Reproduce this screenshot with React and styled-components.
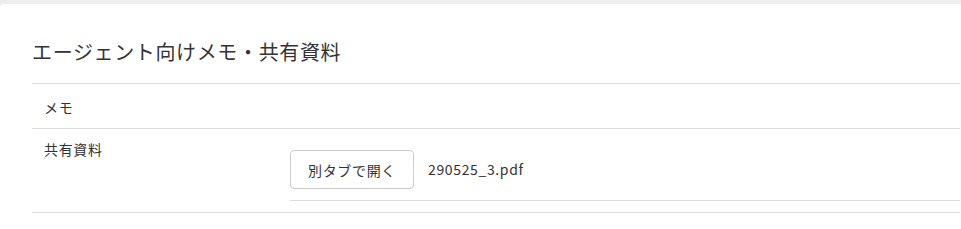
import React from "react";
import styled, { createGlobalStyle } from "styled-components";

const Global = createGlobalStyle`
  html, body { margin: 0; padding: 0; background: #eeeeee; }
  body {
    font-family: "Noto Sans CJK JP", "Noto Sans", sans-serif;
    color: #333333;
    overflow: hidden;
    letter-spacing: 0.04em;
  }
`;

const Card = styled.section`
  margin-top: 4px;
  background: #ffffff;
  border-top-left-radius: 4px;
  padding: 33px 1px 16px 32px;
  height: 176px;
`;

const Title = styled.h2`
  margin: 0;
  font-size: 20px;
  font-weight: 400;
  line-height: 30px;
  padding-bottom: 16px;
  border-bottom: 1px solid #dddddd;
  color: #333333;
`;

const Row = styled.div`
  display: grid;
  grid-template-columns: 258px 1fr;
  border-bottom: 1px solid #dddddd;
`;

const Label = styled.div`
  font-size: 14px;
  line-height: 21px;
  padding: ${(p) => (p.$compact ? "10px" : "13px")} 12px 10px;
`;

const Value = styled.div`
  padding: 12px 0 11px;
`;

const FileItem = styled.div`
  display: flex;
  align-items: center;
  gap: 14px;
  padding: 9px 0 11px;
  border-bottom: 1px solid #dddddd;
`;

const OpenButton = styled.button`
  box-sizing: border-box;
  height: 39px;
  width: 124px;
  padding: 0;
  border: 1px solid #cccccc;
  border-radius: 4px;
  background: #ffffff;
  font-family: inherit;
  letter-spacing: inherit;
  font-size: 14px;
  color: #333333;
  cursor: pointer;
`;

const FileName = styled.span`
  font-size: 14px;
  line-height: 21px;
  color: #333333;
`;

export default function App() {
  return (
    <>
      <Global />
      <Card>
        <Title>エージェント向けメモ・共有資料</Title>
        <Row>
          <Label>メモ</Label>
          <Value />
        </Row>
        <Row>
          <Label $compact>共有資料</Label>
          <Value>
            <FileItem>
              <OpenButton>別タブで開く</OpenButton>
              <FileName>290525_3.pdf</FileName>
            </FileItem>
          </Value>
        </Row>
      </Card>
    </>
  );
}
